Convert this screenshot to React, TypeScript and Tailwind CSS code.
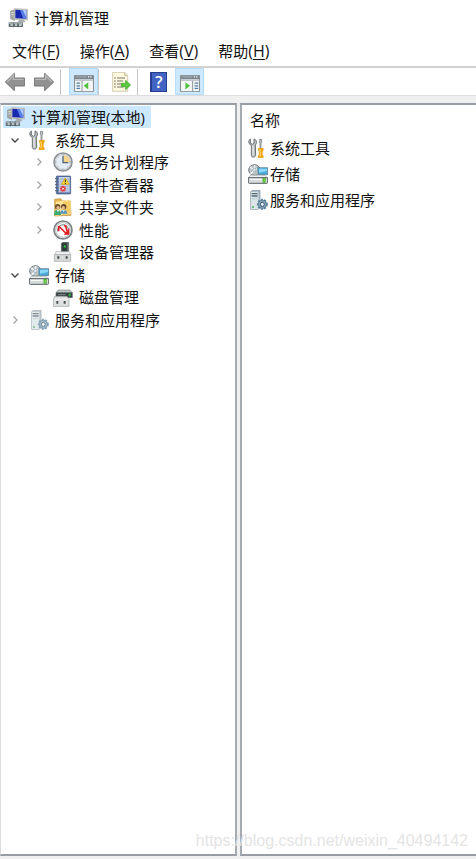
import React, { useState } from 'react';

type IconName =
  | 'computer' | 'tools' | 'clock' | 'events' | 'shared' | 'perf'
  | 'device' | 'storage' | 'disk' | 'services';

interface TreeNode {
  name: string;
  icon: IconName;
  level: 0 | 1 | 2;
  state?: 'open' | 'closed';
  faded?: boolean;
}

const TREE: TreeNode[] = [
  { name: '计算机管理(本地)', icon: 'computer', level: 0 },
  { name: '系统工具', icon: 'tools', level: 1, state: 'open' },
  { name: '任务计划程序', icon: 'clock', level: 2, state: 'closed' },
  { name: '事件查看器', icon: 'events', level: 2, state: 'closed' },
  { name: '共享文件夹', icon: 'shared', level: 2, state: 'closed' },
  { name: '性能', icon: 'perf', level: 2, state: 'closed' },
  { name: '设备管理器', icon: 'device', level: 2 },
  { name: '存储', icon: 'storage', level: 1, state: 'open' },
  { name: '磁盘管理', icon: 'disk', level: 2 },
  { name: '服务和应用程序', icon: 'services', level: 1, state: 'closed', faded: true },
];

const MENUS = [
  { label: '文件', hotkey: 'F' },
  { label: '操作', hotkey: 'A' },
  { label: '查看', hotkey: 'V' },
  { label: '帮助', hotkey: 'H' },
];

const ITEMS: { name: string; icon: IconName }[] = [
  { name: '系统工具', icon: 'tools' },
  { name: '存储', icon: 'storage' },
  { name: '服务和应用程序', icon: 'services' },
];

// Every item icon is drawn on a 60 x 60 grid
const DRAWINGS: Record<IconName, React.ReactNode> = {
  computer: (
    <>
      <path d="M8 9l12-3v31l-12-5z" fill="#a9adac" stroke="#84898a" strokeWidth="2" />
      <path d="M10 14l8-1M10 20h8" stroke="#e8e8e0" strokeWidth="2" />
      <path d="M19 2l40 2v32l-40-2z" fill="#dad9cf" stroke="#a6a8a5" strokeWidth="2" />
      <path d="M22 5l33 2v25l-33-1z" fill="#1729ad" />
      <path d="M36 6l19 1v25l-9 0z" fill="#587ee8" />
      <path d="M44 6l11 1v20z" fill="#b2caff" />
      <path d="M33 35h15l4 8H30z" fill="#a8adaf" />
      <path d="M2 43h43v14H2z" fill="#66727a" />
      <path d="M3 43h41v5H3z" fill="#a2abaf" />
      <path d="M8 51h8M21 51h7M33 51h8" stroke="#dce2e2" strokeWidth="4" />
      <path d="M16 44v14M30 44v14" stroke="#46535c" strokeWidth="2" />
    </>
  ),
  tools: (
    <>
      <path d="M7 3v12l6 4 5-4V3c8 2 10 11 4 18l1 31c-1 7-13 7-13 0V23C1 17 0 8 7 3z" fill="#b9bdbe" stroke="#6c7173" strokeWidth="3" />
      <path d="M15 23v29" stroke="#f5f5f5" strokeWidth="3" />
      <path d="M35 4h6v9l-2 4v14h-3V17l-2-4z" fill="#b8bbbb" stroke="#74797c" strokeWidth="2" />
      <path d="M31 31h15v6l-3 4v9l3 4v5H30v-5l3-4v-9l-2-4z" fill="#f4a60c" stroke="#d98100" strokeWidth="1" />
      <path d="M36 34v7l1 4-1 10" stroke="#ffe388" strokeWidth="3" fill="none" />
    </>
  ),
  clock: (
    <>
      <circle cx="30" cy="30" r="27" fill="#f4f5f6" stroke="#8b9094" strokeWidth="5" />
      <circle cx="30" cy="30" r="23" fill="#e4edf6" stroke="#c4c7c9" strokeWidth="3" />
      <path d="M31 9c12 0 20 9 20 21H31z" fill="#f5d58f" />
      <path d="M30 12v20h16" stroke="#52637a" strokeWidth="4" fill="none" />
      <path d="M30 7v4M30 49v4M7 30h4M49 30h4M14 14l2 2M14 46l2-2M46 46l-2-2" stroke="#7c8793" strokeWidth="2" />
    </>
  ),
  events: (
    <>
      <rect x="10" y="3" width="43" height="54" rx="2" fill="#5674a8" stroke="#40567f" strokeWidth="2" />
      <rect x="17" y="6" width="33" height="46" fill="#c6d3e8" />
      <path d="M20 13h28M20 20h28M20 27h28M20 34h28M20 41h28M20 48h28" stroke="#8ea4cc" strokeWidth="2" />
      <path d="M6 11h10M6 20h10M6 29h10M6 38h10M6 47h10" stroke="#56616f" strokeWidth="3" />
      <path d="M37 9l12 19H25z" fill="#ffdc3c" stroke="#d19a00" strokeWidth="2" />
      <path d="M37 14v8M37 24v3" stroke="#29251a" strokeWidth="3" />
      <circle cx="30" cy="41" r="9" fill="#d4333a" stroke="#f3dfe4" strokeWidth="1" />
      <path d="M27 38l6 6M33 38l-6 6" stroke="#fff" strokeWidth="3" />
    </>
  ),
  shared: (
    <>
      <path d="M5 14V7l18-2 5 7h24l2 43-49 2z" fill="#e5b852" stroke="#b88a31" strokeWidth="2" />
      <path d="M9 14l36-5 8 5v37l-45 5z" fill="#ffe49a" />
      <path d="M30 13h22v35l-22 5z" fill="#f5cc66" />
      <circle cx="14" cy="29" r="8" fill="#70502e" />
      <circle cx="32" cy="29" r="8" fill="#5d432c" />
      <circle cx="15" cy="32" r="5" fill="#e7bd8d" />
      <circle cx="31" cy="32" r="5" fill="#e7bd8d" />
      <path d="M3 54c0-11 5-16 11-16s10 4 10 16z" fill="#3caa75" />
      <path d="M22 50c0-8 4-12 10-12s10 4 11 12z" fill="#5793bd" />
      <path d="M11 39l4 6 4-6M28 39l4 6 4-6" fill="#edf4f6" />
    </>
  ),
  perf: (
    <>
      <circle cx="30" cy="30" r="27" fill="#eceeed" stroke="#7c8183" strokeWidth="5" />
      <circle cx="30" cy="30" r="22" fill="#fcfdfc" stroke="#bdc3c3" strokeWidth="3" />
      <path d="M14 34c-2-21 27-29 33-5" stroke="#65777e" strokeWidth="3" fill="none" />
      <path d="M17 18v16M17 18l24 24" stroke="#e21d22" strokeWidth="5" fill="none" />
      <path d="M33 17l5 1 4 15" stroke="#e21d22" strokeWidth="5" fill="none" />
      <path d="M49 24v20H32z" fill="#e21d22" />
    </>
  ),
  device: (
    <>
      <path d="M25 4l5-3h17v30H25z" fill="#343b3c" stroke="#60696b" strokeWidth="2" />
      <path d="M43 3l4 2v26h-4z" fill="#7a8282" />
      <path d="M32 9h7v9h-7z" fill="#16832d" />
      <path d="M34 11h3v4h-3z" fill="#52f45f" />
      <path d="M9 29h40l4 9H5z" fill="#f0f1f1" stroke="#adb2b3" strokeWidth="2" />
      <path d="M4 38h49v20H4z" fill="#d8dada" stroke="#9ea5a6" strokeWidth="2" />
      <path d="M13 43h6v7h-6zM38 43h6v7h-6z" fill="#444a4b" />
    </>
  ),
  storage: (
    <>
      <ellipse cx="19" cy="18" rx="17" ry="16" fill="#bcc4c7" stroke="#727e82" strokeWidth="3" />
      <path d="M6 9l13 9 1-15M34 13l-15 5-11 12" stroke="#f7faf9" strokeWidth="4" />
      <circle cx="19" cy="18" r="5" fill="#edf2f2" stroke="#87979d" strokeWidth="2" />
      <path d="M29 11h30v21H31z" fill="#4aa9d9" stroke="#4b6e80" strokeWidth="2" />
      <path d="M33 14h24v7l-24 5z" fill="#8bd9fa" />
      <path d="M7 34h44l7 8H1z" fill="#eef0f0" stroke="#a5aaab" strokeWidth="2" />
      <path d="M1 41h58v14c0 2-1 3-3 3H4c-2 0-3-1-3-3z" fill="#d6dada" stroke="#596164" strokeWidth="3" />
      <path d="M6 46h35" stroke="#fff" strokeWidth="3" />
      <path d="M44 42h9v14h-9z" fill="#41ae28" />
      <path d="M47 44h3v9h-3z" fill="#91ed50" />
    </>
  ),
  disk: (
    <>
      <path d="M15 9h36l7 9H9z" fill="#bfc5c6" stroke="#808687" strokeWidth="2" />
      <path d="M9 17h49v15H9z" fill="#363e40" stroke="#687173" strokeWidth="2" />
      <path d="M15 23h23" stroke="#808889" strokeWidth="3" />
      <path d="M47 20h6v8h-6z" fill="#27bb38" />
      <path d="M5 28h37l6 8v22H1V36z" fill="#dfe1e1" stroke="#969d9f" strokeWidth="2" />
      <path d="M2 37h45" stroke="#fff" strokeWidth="2" />
      <path d="M10 42h6v8h-6zM32 42h6v8h-6z" fill="#4c5354" />
    </>
  ),
  services: (
    <>
      <path d="M8 5l6-4h22v52l-6 5H8z" fill="#aebdc5" stroke="#7b909c" strokeWidth="2" />
      <path d="M9 6h22v51H9z" fill="#dce5e8" />
      <path d="M11 11h18M11 18h18" stroke="#536a75" strokeWidth="4" />
      <path d="M11 26h18" stroke="#b7cad3" strokeWidth="3" />
      <path d="M12 51h6" stroke="#47ae55" strokeWidth="4" />
      <circle cx="43" cy="43" r="14" fill="#8cacbf" stroke="#597f99" strokeWidth="5" strokeDasharray="6 4" />
      <circle cx="43" cy="43" r="12" fill="#86a9bf" stroke="#53758b" strokeWidth="2" />
      <circle cx="43" cy="43" r="6" fill="#e5f4fc" stroke="#3c5567" strokeWidth="3" />
    </>
  ),
};

const ItemIcon: React.FC<{ name: IconName; faded?: boolean }> = ({ name, faded }) => (
  <svg viewBox="0 0 60 60" fill="none" aria-hidden="true" className={`size-5 shrink-0 ${faded ? 'opacity-75' : ''}`}>
    {DRAWINGS[name]}
  </svg>
);

const Arrow: React.FC<{ flip?: boolean }> = ({ flip }) => (
  <svg viewBox="0 0 60 60" aria-hidden="true" className={`size-5 ${flip ? '-scale-x-100' : ''}`}>
    <path d="M1 30L28 4v14h31v24H28v14z" fill="#929292" stroke="#757575" strokeWidth="3" strokeLinejoin="round" />
    <path d="M7 29L25 11v11h31" fill="none" stroke="#b8b8b8" strokeWidth="4" />
  </svg>
);

// Small window with a side pane and a green arrow
const PaneIcon: React.FC<{ side: 'left' | 'right' }> = ({ side }) => (
  <svg viewBox="0 0 60 52" fill="none" aria-hidden="true" className="h-[17px] w-5">
    <path d="M1 1h58v50H1z" fill="#f4f6f6" stroke="#858b8e" strokeWidth="3" />
    <path d="M2 2h56v11H2z" fill="#78838b" />
    <path d="M4 6h34" stroke="#aab6be" strokeWidth="3" />
    <path d="M42 6h4M49 6h4" stroke="#fff" strokeWidth="4" />
    <path d="M2 16h56" stroke="#c2c7ca" strokeWidth="5" />
    {side === 'left' ? (
      <>
        <path d="M24 18v32" stroke="#8e979c" strokeWidth="3" />
        <path d="M7 25h11M7 33h11M7 41h11" stroke="#4f7ea6" strokeWidth="4" />
        <path d="M43 22v22L29 33z" fill="#4fc13c" />
      </>
    ) : (
      <>
        <path d="M38 18v32" stroke="#8e979c" strokeWidth="3" />
        <path d="M44 25h11M44 33h11M44 41h11" stroke="#4f7ea6" strokeWidth="4" />
        <path d="M16 22v22l14-11z" fill="#4fc13c" />
      </>
    )}
  </svg>
);

const ExportIcon = () => (
  <svg viewBox="0 0 60 60" fill="none" aria-hidden="true" className="size-5">
    <path d="M5 1h36l9 9v48H5z" fill="#fff9df" stroke="#bbb596" strokeWidth="2" />
    <path d="M41 1v10h9" fill="#e8dfba" stroke="#bbb596" strokeWidth="2" />
    <path d="M10 18h4M10 27h4M10 36h4M10 45h4" stroke="#4b4b43" strokeWidth="3" />
    <path d="M18 18h24M18 27h18M18 36h14M18 45h20" stroke="#77776b" strokeWidth="3" />
    <path d="M31 34h13v-9l15 14-15 14v-9H31z" fill="#5ec842" stroke="#36a421" strokeWidth="2" />
  </svg>
);

const HelpIcon = () => (
  <span className="flex h-5 w-[17px] items-center justify-center border border-l-2 border-[#263f91] bg-[#4464c4] font-['Open_Sans',sans-serif] text-base leading-5 font-semibold text-white">
    ?
  </span>
);

const Separator = () => <span className="h-[26px] w-px bg-[#c5c5c5]" />;

const Chevron: React.FC<{ open: boolean }> = ({ open }) => (
  <svg viewBox="0 0 10 10" fill="none" aria-hidden="true" className="size-2.5">
    {open ? (
      <path d="M1.5 3.5L5 7l3.5-3.5" stroke="#444" strokeWidth="1.3" />
    ) : (
      <path d="M3.5 1.5L7 5 3.5 8.5" stroke="#a3a3a3" strokeWidth="1.3" />
    )}
  </svg>
);

const TreeRow: React.FC<{ node: TreeNode; selected: boolean; onSelect: () => void }> = ({ node, selected, onSelect }) => (
  <li className={`flex items-center ${node.level === 2 ? 'pl-[26px]' : 'pl-0.5'}`}>
    {node.level > 0 && (
      <span className="mr-1 flex w-5 shrink-0 justify-center">
        {node.state && (
          <button type="button" aria-label={`展开或折叠 ${node.name}`}>
            <Chevron open={node.state === 'open'} />
          </button>
        )}
      </span>
    )}
    <button
      type="button"
      onClick={onSelect}
      className={`-ml-0.5 flex h-[22px] items-center gap-1.5 pr-1.5 pl-0.5 whitespace-nowrap ${selected ? 'bg-[#cce8ff]' : ''}`}
    >
      <ItemIcon name={node.icon} faded={node.faded} />
      {node.name}
    </button>
  </li>
);

export default function App() {
  const [selected, setSelected] = useState(TREE[0].name);

  return (
    <div className="relative flex min-h-screen flex-col bg-[#f0f0f0] font-['Open_Sans','Noto_Sans_CJK_SC',sans-serif] text-[15px] leading-5 text-[#111]">
      {/* Title bar */}
      <header className="flex h-9 items-center gap-1.5 bg-white pl-2">
        <ItemIcon name="computer" />
        <h1>计算机管理</h1>
      </header>

      {/* Menu */}
      <nav className="flex h-[30px] items-center gap-5 bg-white pl-3">
        {MENUS.map(m => (
          <button key={m.hotkey} type="button" className="whitespace-nowrap">
            {m.label}
            <span className="text-base leading-5">
              (<span className="underline underline-offset-2">{m.hotkey}</span>)
            </span>
          </button>
        ))}
      </nav>

      {/* Toolbar */}
      <div role="toolbar" className="flex h-[30px] items-center border-t-2 border-b border-t-[#d2d2d2] border-b-[#dedede] bg-white pl-[5px]">
        <div className="mr-1.5 flex gap-[9px]">
          <button type="button" aria-label="后退"><Arrow /></button>
          <button type="button" aria-label="前进"><Arrow flip /></button>
        </div>
        <Separator />
        <button type="button" aria-label="显示/隐藏控制台树" className="ml-2 flex h-[27px] w-[29px] items-center justify-center border border-[#b5dcfa] bg-[#cce8ff] pt-1">
          <PaneIcon side="left" />
        </button>
        <Separator />
        <button type="button" aria-label="导出列表" className="mr-1.5 ml-3"><ExportIcon /></button>
        <Separator />
        <button type="button" aria-label="帮助" className="mr-2 ml-3"><HelpIcon /></button>
        <button type="button" aria-label="显示/隐藏操作窗格" className="flex h-[27px] w-[29px] items-center justify-center border border-[#b5dcfa] bg-[#cce8ff] pt-1">
          <PaneIcon side="right" />
        </button>
      </div>

      {/* Panes */}
      <main className="flex flex-1 gap-[3px] pt-[7px] pb-[3px]">
        <section className="w-[237px] shrink-0 border-y-2 border-r-2 border-l border-y-[#989da3] border-r-[#a5abb2] border-l-[#dcdcdc] bg-white pt-px pl-0.5">
          <ul className="grid h-[225px] grid-rows-10">
            {TREE.map(node => (
              <TreeRow
                key={node.name}
                node={node}
                selected={selected === node.name}
                onSelect={() => setSelected(node.name)}
              />
            ))}
          </ul>
        </section>

        <section className="min-w-0 flex-1 border-y-2 border-l-2 border-y-[#989da3] border-l-[#a5abb2] bg-white">
          <table className="w-full">
            <thead>
              <tr className="h-[30px]">
                <th scope="col" className="pl-2 text-left font-normal">名称</th>
              </tr>
            </thead>
            <tbody>
              {ITEMS.map(item => (
                <tr key={item.name} className="h-[26px]">
                  <td className="pl-1.5">
                    <span className="flex items-center gap-0.5">
                      <ItemIcon name={item.icon} />
                      {item.name}
                    </span>
                  </td>
                </tr>
              ))}
            </tbody>
          </table>
        </section>
      </main>

      <p className="pointer-events-none absolute right-2 bottom-1.5 font-['Liberation_Sans',sans-serif] text-base text-[#e4e4e4]">
        https://blog.csdn.net/weixin_40494142
      </p>
    </div>
  );
}
